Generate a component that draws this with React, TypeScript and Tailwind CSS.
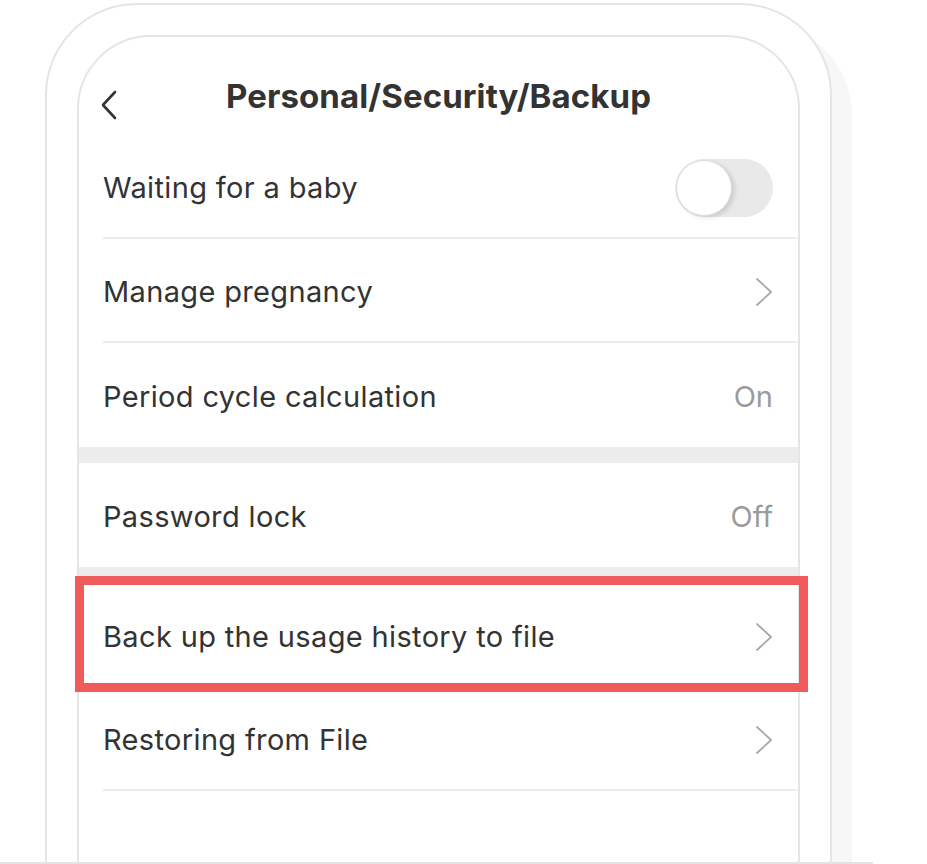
import React from "react";

const font = { fontFamily: "Inter, 'Noto Sans', sans-serif" };

function Chevron() {
  return (
    <svg width="18" height="30" viewBox="0 0 18 30" fill="none" className="shrink-0">
      <path d="M2 2 L16 15 L2 28" stroke="#a8a8a8" strokeWidth="1.8" strokeLinecap="round" strokeLinejoin="round" />
    </svg>
  );
}

function Row({ label, right, divider = true, children }: { label: string; right?: React.ReactNode; divider?: boolean; children?: React.ReactNode }) {
  return (
    <div className="relative pl-[24px]">
      <div className={`flex h-[104px] items-center justify-between pr-[25px] pt-[3px] ${divider ? "border-b-2 border-[#ececec]" : ""}`}>
        <span className="text-[29px] text-[#333333] tracking-[0.35px]">{label}</span>
        {right}
      </div>
      {children}
    </div>
  );
}

function Band() {
  return <div className="h-[16px] bg-[#ececec]" />;
}

export default function App() {
  return (
    <div className="w-[927px] bg-white" style={font}>
      <div className="h-[862px] overflow-hidden pl-[45px] pt-[3px]">
        <div className="w-[787px] h-[900px] rounded-t-[92px] border-2 border-[#e5e5e5] bg-white px-[30px] pt-[30px] shadow-[20px_20px_0_#f7f7f7]">
          <div className="h-[880px] rounded-t-[74px] border-2 border-[#e5e5e5] bg-white">
            {/* header */}
            <div className="relative flex h-[98px] items-center justify-center pt-[22px]">
              <svg width="18" height="30" viewBox="0 0 18 30" fill="none" className="absolute left-[21px] top-[53px]">
                <path d="M15 2 L3 15 L15 28" stroke="#333333" strokeWidth="2.6" strokeLinecap="round" strokeLinejoin="round" />
              </svg>
              <h1 className="text-[33px] font-bold text-[#333333] tracking-[0.1px]">Personal/Security/Backup</h1>
            </div>
            <Row
              label="Waiting for a baby"
              right={
                <div className="relative h-[58px] w-[98px] rounded-full bg-[#e9e9e9]">
                  <div className="absolute left-[1px] top-[1px] h-[56px] w-[56px] rounded-full border border-[#dcdcdc] bg-white shadow-[3px_2px_4px_rgba(0,0,0,0.12)]" />
                </div>
              }
            />
            <Row label="Manage pregnancy" right={<Chevron />} />
            <Row label="Period cycle calculation" divider={false} right={<span className="text-[29px] text-[#9a9a9a]">On</span>} />
            <Band />
            <Row label="Password lock" divider={false} right={<span className="text-[29px] text-[#9a9a9a]">Off</span>} />
            <Band />
            <div className="relative">
              <Row label="Back up the usage history to file" divider={false} right={<Chevron />} />
              <div className="absolute -left-[4px] -right-[10px] -top-[7px] -bottom-[5px] border-[9px] border-[#ef5a5a]" />
            </div>
            <Row label="Restoring from File" right={<Chevron />} />
          </div>
        </div>
      </div>
      <div className="h-[2px] w-[873px] bg-[#e3e3e3]" />
    </div>
  );
}
